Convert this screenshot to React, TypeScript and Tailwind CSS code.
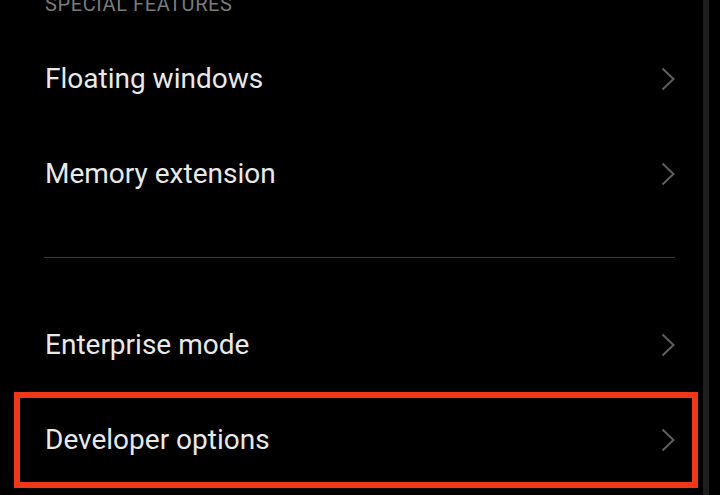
const Chevron = () => (
  <svg width="14" height="24" viewBox="0 0 14 24" className="shrink-0">
    <path d="M1.5 1.5 L12.5 12 L1.5 22.5" fill="none" stroke="#5f5f5f" strokeWidth="2" />
  </svg>
);

const Row = ({ label }: { label: string }) => (
  <div className="flex h-[95px] items-center justify-between pl-[45px] pr-[28px]">
    <span className="text-[28px] text-[#e8e8e8]">{label}</span>
    <Chevron />
  </div>
);

const App = () => {
  return (
    <div
      className="flex h-[495px] w-[720px] overflow-hidden bg-black"
      style={{ fontFamily: "Roboto, 'Noto Sans', sans-serif" }}
    >
      <div className="flex w-[703px] flex-col">
        <div className="h-[31px] pl-[45px]">
          <div className="-mt-[6px] text-[20px] leading-[20px] tracking-[0.6px] text-[#7a7a7a]">
            SPECIAL FEATURES
          </div>
        </div>
        <Row label="Floating windows" />
        <Row label="Memory extension" />
        <div className="ml-[44px] mr-[28px] mt-[36px] mb-[39px] h-px bg-[#3a3a3a]" />
        <Row label="Enterprise mode" />
        <div className="ml-[14px] mr-[5px] flex h-[96px] items-center justify-between border-[6px] border-[#ee3819] pl-[25px] pr-[17px]">
          <span className="text-[28px] text-[#e8e8e8]">Developer options</span>
          <Chevron />
        </div>
      </div>
      <div className="w-[6px] bg-[#1e1e1e]" />
    </div>
  );
};

export default App;
